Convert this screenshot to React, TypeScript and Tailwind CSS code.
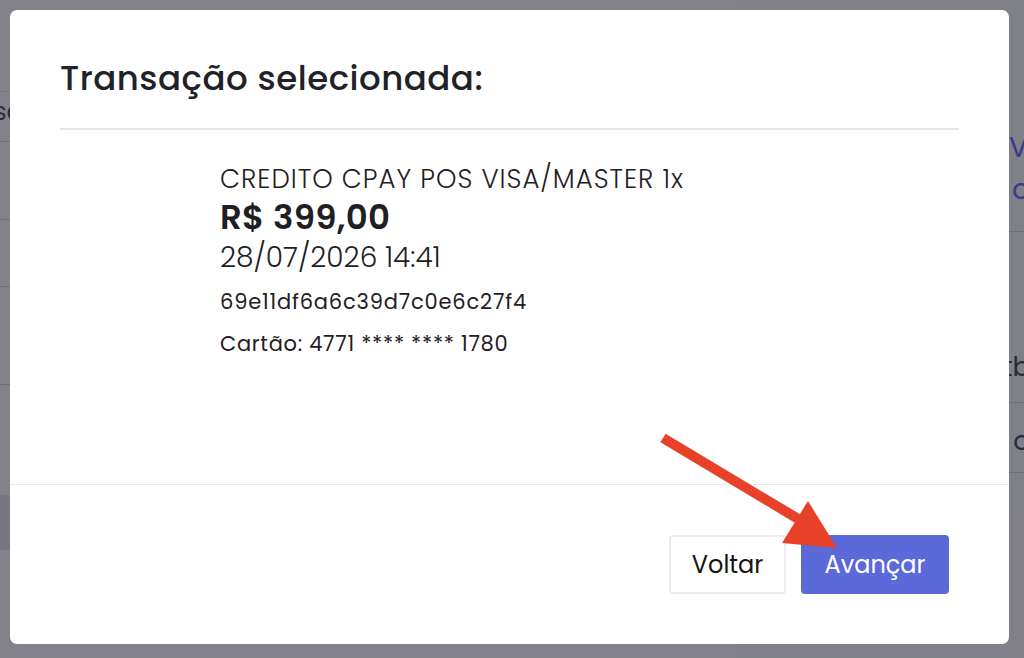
import React from 'react';

const font = { fontFamily: 'Poppins, Inter, "Noto Sans", sans-serif' };

function BackgroundPage() {
  return (
    <div className="flex h-[658px] w-full bg-white text-gray-700">
      <div className="flex w-[736px] flex-col">
        <div className="h-[92px] border-b border-gray-200" />
        <div className="flex h-[50px] items-start border-b border-gray-300 pt-[4px] text-[24px] leading-[32px]">
          <span className="-ml-[6px]">sobre</span>
        </div>
        <div className="h-[78px] border-b border-gray-300" />
        <div className="h-[67px] border-b border-gray-300" />
        <div className="h-[98px] border-b border-gray-300" />
        <div className="h-[110px]" />
        <div className="h-[55px] bg-gray-200" />
      </div>
      <div className="flex flex-1 flex-col bg-gray-50">
        <div className="h-[126px]" />
        <div className="flex h-[106px] flex-col items-end border-b border-gray-300 pt-[1px] text-[28px] leading-[42px] text-indigo-500">
          <span className="-mr-[4px]">V</span>
          <span className="-mr-[6px]">o</span>
        </div>
        <div className="h-[118px]" />
        <div className="flex h-[53px] items-start justify-end border-b border-gray-300 text-[26px] leading-[34px]">
          <span className="-mr-[6px]">tb</span>
        </div>
        <div className="flex h-[70px] items-center justify-end border-b border-gray-300 pt-[8px] text-[26px]">
          <span className="-mr-[6px]">o</span>
        </div>
      </div>
    </div>
  );
}

function Arrow() {
  return (
    <svg className="pointer-events-none absolute inset-0 h-[658px] w-[1024px]" viewBox="0 0 1024 658">
      <line x1="663" y1="438" x2="805" y2="523" stroke="#e8412a" strokeWidth="10" strokeLinecap="butt" />
      <polygon points="782,543 808,501 837,548" fill="#e8412a" />
    </svg>
  );
}

export default function App() {
  return (
    <div className="relative h-[658px] w-[1024px] overflow-hidden" style={font}>
      <BackgroundPage />
      <div className="absolute inset-0 flex bg-[#1e1c2b]/55 p-[10px]">
        <div className="flex h-[634px] w-[999px] flex-col rounded-[7px] bg-white">
          <div className="px-[50px] pt-[48px]">
            <div className="border-b-2 border-[#e6e6e6] pb-[30px]">
              <h2 className="text-[34px] leading-[40px] font-medium tracking-[0.5px] text-[#212227]">
                Transação selecionada:
              </h2>
            </div>
          </div>
          <div className="flex-1 border-b border-[#e8e8ee] pl-[210px] pt-[33px] text-[#1f2024]">
            <div className="text-[26px] leading-[32px] font-light tracking-[1px]">CREDITO CPAY POS VISA/MASTER 1x</div>
            <div className="text-[34px] leading-[44px] font-semibold tracking-[0.3px]">R$ 399,00</div>
            <div className="text-[28px] leading-[38px] font-light">28/07/2026 14:41</div>
            <div className="mt-[12px] text-[21px] leading-[26px] tracking-[0.8px]">69e11df6a6c39d7c0e6c27f4</div>
            <div className="mt-[16px] text-[21px] leading-[26px] tracking-[0.7px]">Cartão: 4771 **** **** 1780</div>
          </div>
          <div className="flex justify-end gap-[15px] px-[60px] pt-[50px] pb-[50px]">
            <button className="h-[59px] w-[117px] rounded-[4px] border-2 border-[#ebebf1] bg-white text-[24px] text-[#141414]">
              Voltar
            </button>
            <button className="h-[59px] w-[148px] rounded-[4px] bg-[#5b69d9] text-[24px] text-white">
              Avançar
            </button>
          </div>
        </div>
      </div>
      <Arrow />
    </div>
  );
}
